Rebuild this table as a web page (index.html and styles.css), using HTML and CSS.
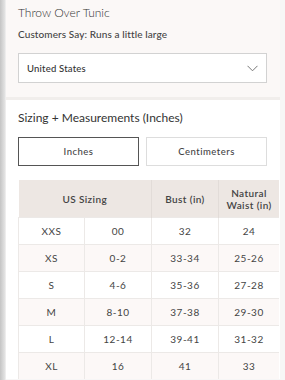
FILE: index.html
```html
<!DOCTYPE html>
<html lang="en">
<head>
    <meta charset="UTF-8">
    <meta name="viewport" content="width=device-width, initial-scale=1.0">
    <title>Size Guide</title>
    <link rel="stylesheet" href="styles.css">
</head>
<body>
    <div class="panel">
        <div class="top">
            <div class="title">Throw Over Tunic</div>
            <div class="note">Customers Say: Runs a little large</div>
            <div class="select">
                <span>United States</span>
                <svg class="chevron" width="11" height="7" viewBox="0 0 11 7">
                    <path d="M0.5 0.8 L5.5 5.8 L10.5 0.8" fill="none" stroke="#777" stroke-width="1"/>
                </svg>
            </div>
        </div>
        <div class="bottom">
            <h2>Sizing + Measurements (Inches)</h2>
            <div class="toggle">
                <div class="unit active">Inches</div>
                <div class="unit">Centimeters</div>
            </div>
            <table class="sizes">
                <thead>
                    <tr>
                        <th colspan="2">US Sizing</th>
                        <th>Bust (in)</th>
                        <th>Natural<br>Waist (in)</th>
                    </tr>
                </thead>
                <tbody>
                    <tr><td>XXS</td><td>00</td><td>32</td><td>24</td></tr>
                    <tr><td>XS</td><td>0-2</td><td>33-34</td><td>25-26</td></tr>
                    <tr><td>S</td><td>4-6</td><td>35-36</td><td>27-28</td></tr>
                    <tr><td>M</td><td>8-10</td><td>37-38</td><td>29-30</td></tr>
                    <tr><td>L</td><td>12-14</td><td>39-41</td><td>31-32</td></tr>
                    <tr><td>XL</td><td>16</td><td>41</td><td>33</td></tr>
                </tbody>
            </table>
        </div>
    </div>
</body>
</html>
```

FILE: styles.css
```css
body {
    margin: 0;
    font-family: 'Lato', 'Liberation Sans', sans-serif;
    color: #3a3a3a;
    background: linear-gradient(90deg, #c4c4c4 0, #e4e4e4 5px, #f7f6f6 6px);
    height: 380px;
    overflow: hidden;
}
.panel {
    margin-left: 6px;
    width: 274px;
    background: #fff;
}
.top {
    background: #fbf8f7;
    padding: 5px 12px 14px;
    border-bottom: 3px solid #f1eeec;
}
.title {
    font-size: 12px;
    font-weight: 300;
    color: #333;
    line-height: 16px;
}
.note {
    margin-top: 5px;
    font-size: 10px;
    font-weight: 500;
    letter-spacing: 0.1px;
    color: #444;
    line-height: 16px;
}
.select {
    margin-top: 11px;
    width: 249px;
    height: 30px;
    box-sizing: border-box;
    border: 1px solid #d2d2d2;
    background: #fff;
    display: flex;
    align-items: center;
    justify-content: space-between;
    padding: 0 8px 0 8px;
    font-size: 9.5px;
    font-weight: 500;
    letter-spacing: 0.2px;
    color: #333;
}
.bottom {
    padding: 10px 12px 0;
}
.bottom h2 {
    margin: 0;
    font-size: 12px;
    font-weight: 400;
    color: #333;
    line-height: 16px;
}
.toggle {
    margin-top: 11px;
    width: 249px;
    display: grid;
    grid-template-columns: 1fr 1fr;
    gap: 7px;
}
.unit {
    height: 29px;
    box-sizing: border-box;
    border: 1px solid #ddd;
    display: flex;
    align-items: center;
    justify-content: center;
    font-size: 9.5px;
    font-weight: 500;
    letter-spacing: 0.5px;
    color: #444;
}
.unit.active {
    border-color: #555;
}
.sizes {
    margin-top: 14px;
    width: 261px;
    border-collapse: collapse;
    font-size: 10px;
    letter-spacing: 0.5px;
    color: #444;
    text-align: center;
}
.sizes th {
    background: #ede7e3;
    font-weight: 600;
    font-size: 10px;
    letter-spacing: 0.4px;
    height: 37px;
    padding: 0;
    line-height: 12px;
    border-left: 1px solid #e2dcd8;
    vertical-align: middle;
}
.sizes th:first-child {
    border-left: none;
}
.sizes td {
    height: 26px;
    padding: 0;
    border-top: 1px solid #ece9e7;
    border-left: 1px solid #ece9e7;
}
.sizes tbody tr:nth-child(even) td {
    background: #fcf8f7;
}
.sizes td:nth-child(1) { width: 65px; }
.sizes td:nth-child(2) { width: 66px; }
.sizes td:nth-child(3) { width: 66px; }
```
